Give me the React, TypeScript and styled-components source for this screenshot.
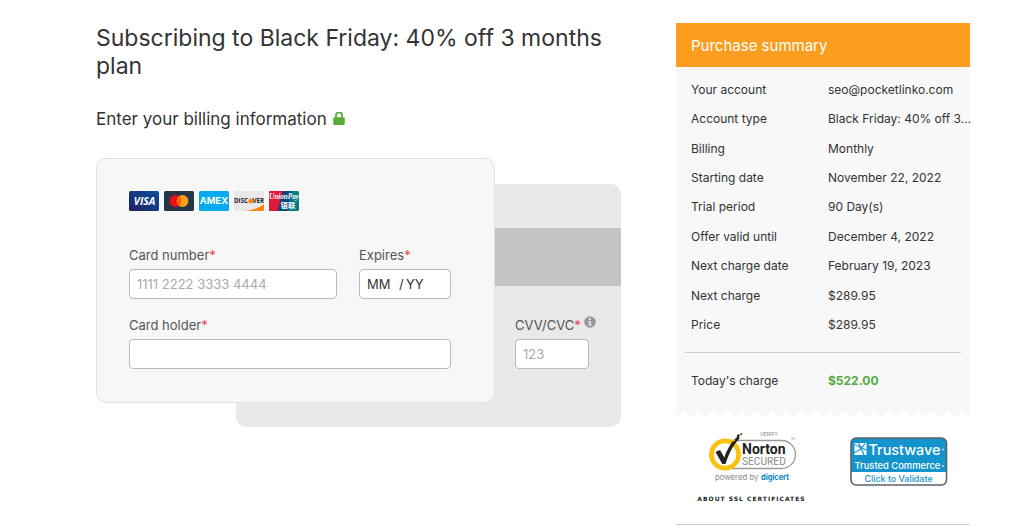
import React from "react";
import styled, { createGlobalStyle } from "styled-components";

const GlobalStyle = createGlobalStyle`
  *, *::before, *::after { box-sizing: border-box; }
  body {
    margin: 0;
    background: #fff;
    color: #333;
    font-family: Inter, "Liberation Sans", sans-serif;
    font-size: 13px;
  }
`;

const Page = styled.div`
  display: grid;
  grid-template-columns: minmax(0, 1fr) 294px;
  gap: 55px;
  align-items: start;
  max-width: 1024px;
  padding: 23px 54px 0 96px;
`;

const Main = styled.main`
  padding-top: 1px;
`;

const Title = styled.h1`
  margin: 0;
  font-size: 23px;
  line-height: 28px;
  font-weight: 400;
`;

const Subtitle = styled.h2`
  display: flex;
  align-items: center;
  gap: 6px;
  margin: 29px 0;
  font-size: 17px;
  line-height: 20px;
  font-weight: 400;
`;

const CardStage = styled.form`
  display: grid;
  grid-template-columns: 140px minmax(0, 1fr) 126px;
  grid-template-rows: 26px auto 24px;
`;

const CardFront = styled.div`
  grid-area: 1 / 1 / 3 / 3;
  z-index: 1;
  padding: 32px 43px 33px 32px;
  border: 1px solid #e0e0e0;
  border-radius: 10px;
  background: #f7f7f7;
`;

const CardBack = styled.div`
  grid-area: 2 / 2 / 4 / 4;
  display: flex;
  flex-direction: column;
  align-items: flex-end;
  padding-top: 44px;
  border-radius: 10px;
  background: #e9e9e9;
`;

const MagneticStripe = styled.div`
  width: 100%;
  height: 58px;
  background: #c4c4c4;
`;

const BackField = styled.div`
  width: 106px;
  margin-top: 30px;
`;

const Brands = styled.div`
  display: flex;
  gap: 5px;
  margin-bottom: 35px;
`;

const Fields = styled.div`
  display: grid;
  grid-template-columns: minmax(0, 1fr) 92px;
  gap: 17px 22px;
`;

const Field = styled.div<{ $wide?: boolean }>`
  grid-column: ${(p) => (p.$wide ? "1 / -1" : "auto")};
`;

const LabelRow = styled.div`
  display: flex;
  gap: 3px;
  height: 18px;
  margin-bottom: 5px;
`;

const Label = styled.label`
  font-size: 13px;
  line-height: 18px;
  color: #555;
`;

const Required = styled.span`
  color: #e8474c;
`;

const Input = styled.input<{ $width?: string }>`
  display: block;
  width: ${(p) => p.$width ?? "100%"};
  height: 30px;
  padding: 0 7px;
  border: 1px solid #b4bcc0;
  border-radius: 4px;
  background: #fff;
  color: #333;
  font: 13px Inter, "Liberation Sans", sans-serif;
  &::placeholder { color: #aaa; opacity: 1; }
`;

const ExpiryBox = styled.div`
  display: flex;
  align-items: center;
  height: 30px;
  padding: 0 7px;
  border: 1px solid #b4bcc0;
  border-radius: 4px;
  background: #fff;
`;

const ExpiryInput = styled.input<{ $width: number }>`
  width: ${(p) => p.$width}px;
  padding: 0;
  border: 0;
  background: none;
  font: 13px Inter, "Liberation Sans", sans-serif;
  &::placeholder { color: #333; opacity: 1; }
`;

const Slash = styled.span`
  width: 7px;
`;

const Panel = styled.section`
  background: #f8f8f8;
`;

const PanelTitle = styled.h2`
  margin: 0;
  padding: 1px 15px 0;
  background: #fb9d1e;
  color: #fff;
  font-size: 15px;
  line-height: 43px;
  font-weight: 400;
`;

const Details = styled.dl`
  display: grid;
  grid-auto-rows: 1fr;
  min-height: 265px;
  margin: 8px 0 12px;
  padding-left: 15px;
`;

const Row = styled.div`
  display: grid;
  grid-template-columns: 137px minmax(0, 1fr);
  align-items: center;
  font-size: 12px;
  line-height: 20px;
`;

const Term = styled.dt``;

const Value = styled.dd<{ $total?: boolean }>`
  margin: 0;
  white-space: nowrap;
  color: ${(p) => (p.$total ? "#55ab41" : "inherit")};
  font-weight: ${(p) => (p.$total ? 700 : 400)};
`;

const Rule = styled.hr`
  height: 1px;
  margin: 0 9px;
  border: 0;
  background: #d0d0d0;
`;

const Total = styled.dl`
  margin: 0;
  padding: 18px 0 19px 15px;
`;

const TornEdge = styled.div`
  height: 7px;
  background: conic-gradient(from 135deg at 50% 0, #fff 90deg, #f8f8f8 90deg);
  background-size: 15px 7px;
  background-repeat: round no-repeat;
`;

const Seals = styled.div`
  display: grid;
  grid-template-columns: 151px 1fr;
  padding: 13px 0 20px;
  border-bottom: 1px solid #ccc;
`;

const NortonSeal = styled.div`
  display: flex;
  flex-direction: column;
  align-items: center;
  gap: 10px;
`;

const SealLink = styled.a`
  display: block;
  color: #222;
  text-decoration: none;
  svg { display: block; }
`;

const SslLink = styled.a`
  color: #222;
  font: bold 6px/10px "DejaVu Sans", sans-serif;
  letter-spacing: 1px;
  white-space: nowrap;
  text-decoration: none;
`;

const TrustwaveLink = styled(SealLink)`
  margin: 7px 0 0 23px;
`;

const LockIcon = () => (
  <svg width="12" height="14" viewBox="0 0 12 14" aria-hidden="true">
    <path d="M3 6V3.3a3 3 0 0 1 6 0V6" fill="none" stroke="#55ad35" strokeWidth="1.9" />
    <rect x="0.3" y="5.3" width="11.4" height="7.6" rx="1.2" fill="#55ad35" />
  </svg>
);

const InfoIcon = () => (
  <svg width="12" height="12" viewBox="0 0 12 12" role="img" aria-label="Information">
    <circle cx="6" cy="6" r="5.8" fill="#999" />
    <path d="M4.5 5h2.3v3.6h.9v1H4.3v-1h.9V6h-.7zM5.1 2.3h1.7v1.6H5.1z" fill="#eee" />
  </svg>
);

const brandFont = '"Open Sans", sans-serif';

const Visa = () => (
  <svg width="30" height="20" viewBox="0 0 30 20">
    <defs>
      <linearGradient id="visa-bg" x1="0" x2="1" y1="1" y2="0">
        <stop offset="0" stopColor="#20205f" />
        <stop offset="1" stopColor="#0b4fa0" />
      </linearGradient>
    </defs>
    <rect width="30" height="20" rx="1.5" fill="url(#visa-bg)" />
    <text x="15.5" y="13.8" textAnchor="middle" fill="#fff" fontFamily={brandFont} fontSize="10.4" fontWeight="700" fontStyle="italic">VISA</text>
  </svg>
);

const Mastercard = () => (
  <svg width="30" height="20" viewBox="0 0 30 20" role="img" aria-label="Mastercard">
    <rect width="30" height="20" rx="1.5" fill="#253747" />
    <circle cx="11.5" cy="10" r="5.9" fill="#eb0c14" />
    <circle cx="18.5" cy="10" r="5.9" fill="#f99f1b" />
    <path d="M15 5.25a5.9 5.9 0 0 1 0 9.5a5.9 5.9 0 0 1 0-9.5z" fill="#fb5f05" />
  </svg>
);

const Amex = () => (
  <svg width="30" height="20" viewBox="0 0 30 20">
    <rect width="30" height="20" rx="1.5" fill="#06aaf0" />
    <text x="15" y="13.4" textAnchor="middle" fill="#fff" fontFamily="Inter, sans-serif" fontSize="9.4" fontWeight="700">AMEX</text>
  </svg>
);

const Discover = () => (
  <svg width="30" height="20" viewBox="0 0 30 20">
    <rect width="30" height="20" rx="1.5" fill="#e8e8e8" />
    <path d="M11.5 20Q23 18.4 30 13.2V18.5a1.5 1.5 0 0 1-1.5 1.5z" fill="#ff8706" />
    <text x="0" y="12.3" fill="#222" fontFamily={brandFont} fontSize="6.2" fontWeight="700">DISC</text>
    <text x="30" y="12.3" textAnchor="end" fill="#222" fontFamily={brandFont} fontSize="6.2" fontWeight="700">VER</text>
    <circle cx="16.8" cy="10" r="2.5" fill="#ff8706" />
  </svg>
);

const UnionPay = () => (
  <svg width="30" height="20" viewBox="0 0 30 20">
    <rect width="30" height="20" rx="1.5" fill="#047d83" />
    <path d="M1.5 0H23L18.5 20h-17A1.5 1.5 0 0 1 0 18.5v-17A1.5 1.5 0 0 1 1.5 0z" fill="#08497e" />
    <path d="M1.5 0H14L8.5 20h-7A1.5 1.5 0 0 1 0 18.5v-17A1.5 1.5 0 0 1 1.5 0z" fill="#dd1838" />
    <text x="15" y="8" textAnchor="middle" fill="#fff" fontFamily='"Liberation Serif", serif' fontSize="7.2" fontWeight="700" fontStyle="italic">UnionPay</text>
    <text x="19" y="16.6" textAnchor="middle" fill="#fff" fontFamily='"Noto Sans CJK SC", sans-serif' fontSize="7.4" fontWeight="700">银联</text>
  </svg>
);

const NortonLogo = () => (
  <svg width="92" height="54" viewBox="0 0 92 54">
    <text x="63" y="6" textAnchor="middle" fill="#888" fontFamily="Roboto, sans-serif" fontSize="5.5">VERIFY</text>
    <rect x="8" y="10.5" width="81.5" height="28" rx="14" fill="#fff" stroke="#9a9a9a" strokeWidth="1.3" />
    <circle cx="19" cy="24.5" r="13.6" fill="#fff" stroke="#fcc10f" strokeWidth="4.8" />
    <path d="M9.5 22l4.5-2 4.3 7.5C22 17 26 11 33 5.5l.3 3.2C27 15.5 23 23 19.5 34h-3.2z" fill="#222" />
    <path d="M30.5 6l2-2 1.5 1.5-2 2zM34 4.5l1.5-1.5 1 1-1.5 1.5z" fill="#222" />
    <path d="M26.5 10l2-1 .8 1.3-1.8 1.4zM33 7.5l1.3-.8.7 1-1.2.9z" fill="#fcc10f" />
    <text x="36" y="24" fill="#222" fontFamily="Roboto, sans-serif" fontSize="14" fontWeight="700">Norton</text>
    <text x="36" y="35" fill="#888" fontFamily="Roboto, sans-serif" fontSize="10.2">SECURED</text>
    <text x="84.5" y="10" fill="#999" fontFamily="Roboto, sans-serif" fontSize="3">TM</text>
    <text x="9" y="50" fill="#888" fontFamily="Inter, sans-serif" fontSize="7.8">powered by</text>
    <text x="55" y="50" fill="#087fc5" fontFamily="Inter, sans-serif" fontSize="7.4" fontWeight="700">digicert</text>
  </svg>
);

const TrustwaveLogo = () => (
  <svg width="98" height="49" viewBox="0 0 98 49">
    <rect x="1" y="1" width="95.5" height="47" rx="5" fill="#fff" />
    <path d="M1 35V6a5 5 0 0 1 5-5h85.5a5 5 0 0 1 5 5v29z" fill="#1394cd" />
    <rect x="1" y="1" width="95.5" height="47" rx="5" fill="none" stroke="#5b6369" strokeWidth="1.6" />
    <rect x="4.5" y="6" width="12" height="12" fill="#fff" />
    <path d="M4 15.5c4-1 8-4 11-9M4.5 7.5c4 1 8 5 9.5 10.5M8.5 6c1 3 4 6 8 7" fill="none" stroke="#1394cd" strokeWidth="1.2" />
    <text x="18.5" y="17.5" fill="#fff" fontFamily="Inter, sans-serif" fontSize="14.4" fontWeight="500">Trustwave</text>
    <text x="4.5" y="32" fill="#fff" fontFamily="Inter, sans-serif" fontSize="9.4" fontWeight="500">Trusted Commerce</text>
    <circle cx="93" cy="12.5" r="0.9" fill="#cdeaf7" />
    <circle cx="93" cy="29" r="0.9" fill="#cdeaf7" />
    <text x="48.5" y="44.5" textAnchor="middle" fill="#1394cd" fontFamily="Inter, sans-serif" fontSize="8.9" fontWeight="500">Click to Validate</text>
  </svg>
);

const details: [string, string][] = [
  ["Your account", "seo@pocketlinko.com"],
  ["Account type", "Black Friday: 40% off 3..."],
  ["Billing", "Monthly"],
  ["Starting date", "November 22, 2022"],
  ["Trial period", "90 Day(s)"],
  ["Offer valid until", "December 4, 2022"],
  ["Next charge date", "February 19, 2023"],
  ["Next charge", "$289.95"],
  ["Price", "$289.95"],
];

export default function App() {
  return (
    <>
      <GlobalStyle />
      <Page>
        <Main>
          <Title>Subscribing to Black Friday: 40% off 3 months plan</Title>
          <Subtitle>
            Enter your billing information
            <LockIcon />
          </Subtitle>
          <CardStage>
            <CardFront>
              <Brands>
                <Visa />
                <Mastercard />
                <Amex />
                <Discover />
                <UnionPay />
              </Brands>
              <Fields>
                <Field>
                  <LabelRow>
                    <Label htmlFor="card-number">Card number<Required>*</Required></Label>
                  </LabelRow>
                  <Input id="card-number" inputMode="numeric" placeholder="1111 2222 3333 4444" />
                </Field>
                <Field>
                  <LabelRow>
                    <Label htmlFor="exp-month">Expires<Required>*</Required></Label>
                  </LabelRow>
                  <ExpiryBox>
                    <ExpiryInput id="exp-month" $width={32} placeholder="MM" />
                    <Slash>/</Slash>
                    <ExpiryInput aria-label="Expiry year" $width={30} placeholder="YY" />
                  </ExpiryBox>
                </Field>
                <Field $wide>
                  <LabelRow>
                    <Label htmlFor="card-holder">Card holder<Required>*</Required></Label>
                  </LabelRow>
                  <Input id="card-holder" />
                </Field>
              </Fields>
            </CardFront>
            <CardBack>
              <MagneticStripe />
              <BackField>
                <LabelRow>
                  <Label htmlFor="cvv">CVV/CVC<Required>*</Required></Label>
                  <InfoIcon />
                </LabelRow>
                <Input id="cvv" $width="74px" placeholder="123" />
              </BackField>
            </CardBack>
          </CardStage>
        </Main>
        <aside>
          <Panel>
            <PanelTitle>Purchase summary</PanelTitle>
            <Details>
              {details.map(([term, value]) => (
                <Row key={term}>
                  <Term>{term}</Term>
                  <Value>{value}</Value>
                </Row>
              ))}
            </Details>
            <Rule />
            <Total>
              <Row>
                <Term>Today's charge</Term>
                <Value $total>$522.00</Value>
              </Row>
            </Total>
            <TornEdge />
          </Panel>
          <Seals>
            <NortonSeal>
              <SealLink href="#norton"><NortonLogo /></SealLink>
              <SslLink href="#ssl">ABOUT SSL CERTIFICATES</SslLink>
            </NortonSeal>
            <TrustwaveLink href="#trustwave"><TrustwaveLogo /></TrustwaveLink>
          </Seals>
        </aside>
      </Page>
    </>
  );
}
